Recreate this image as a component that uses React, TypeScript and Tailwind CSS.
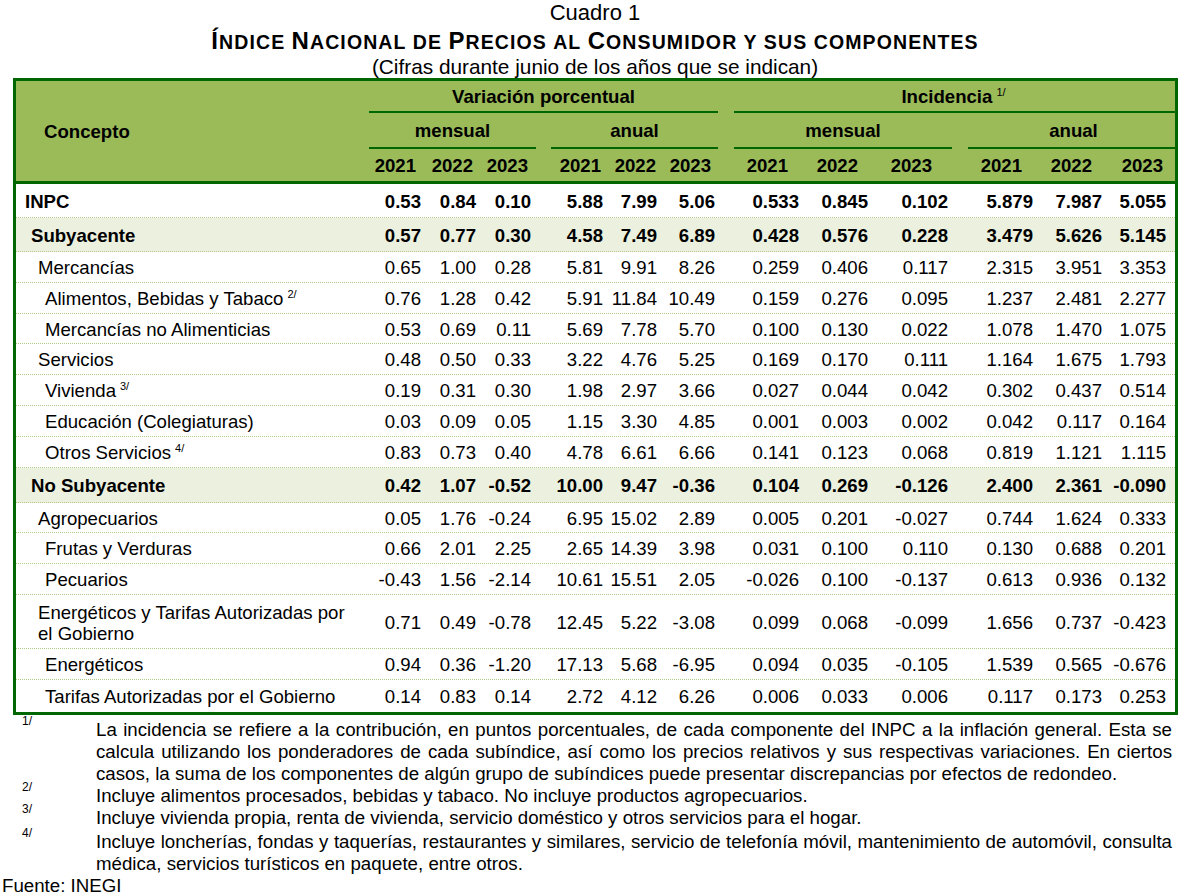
import React from "react";

const COLS =
  "grid grid-cols-[353px_55px_55px_57px_15px_55px_55px_57px_16px_73px_72px_73px_16px_72px_68px_67px]";

const numPr = [
  "pr-[3px]",
  "pr-[3px]",
  "pr-[5px]",
  "pr-[3px]",
  "pr-[4px]",
  "pr-[3px]",
  "pr-[8px]",
  "pr-[11px]",
  "pr-[4px]",
  "pr-[7px]",
  "pr-[6px]",
  "pr-[9px]",
];
const yearPr = [
  "pr-[8px]",
  "pr-[6px]",
  "pr-[8px]",
  "pr-[5px]",
  "pr-[5px]",
  "pr-[7px]",
  "pr-[19px]",
  "pr-[21px]",
  "pr-[20px]",
  "pr-[18px]",
  "pr-[16px]",
  "pr-[12px]",
];
const indent = ["pl-[9px]", "pl-[15px]", "pl-[22px]", "pl-[29px]"];

type Row = {
  label: string;
  sup?: string;
  level: number;
  bold?: boolean;
  shade?: boolean;
  h: string;
  wrap?: boolean;
  v: string[];
};

const rows: Row[] = [
  { label: "INPC", level: 0, bold: true, h: "h-[34px]", v: ["0.53", "0.84", "0.10", "5.88", "7.99", "5.06", "0.533", "0.845", "0.102", "5.879", "7.987", "5.055"] },
  { label: "Subyacente", level: 1, bold: true, shade: true, h: "h-[34px]", v: ["0.57", "0.77", "0.30", "4.58", "7.49", "6.89", "0.428", "0.576", "0.228", "3.479", "5.626", "5.145"] },
  { label: "Mercancías", level: 2, h: "h-[31px]", v: ["0.65", "1.00", "0.28", "5.81", "9.91", "8.26", "0.259", "0.406", "0.117", "2.315", "3.951", "3.353"] },
  { label: "Alimentos, Bebidas y Tabaco", sup: "2/", level: 3, h: "h-[31px]", v: ["0.76", "1.28", "0.42", "5.91", "11.84", "10.49", "0.159", "0.276", "0.095", "1.237", "2.481", "2.277"] },
  { label: "Mercancías no Alimenticias", level: 3, h: "h-[30px]", v: ["0.53", "0.69", "0.11", "5.69", "7.78", "5.70", "0.100", "0.130", "0.022", "1.078", "1.470", "1.075"] },
  { label: "Servicios", level: 2, h: "h-[31px]", v: ["0.48", "0.50", "0.33", "3.22", "4.76", "5.25", "0.169", "0.170", "0.111", "1.164", "1.675", "1.793"] },
  { label: "Vivienda", sup: "3/", level: 3, h: "h-[31px]", v: ["0.19", "0.31", "0.30", "1.98", "2.97", "3.66", "0.027", "0.044", "0.042", "0.302", "0.437", "0.514"] },
  { label: "Educación (Colegiaturas)", level: 3, h: "h-[31px]", v: ["0.03", "0.09", "0.05", "1.15", "3.30", "4.85", "0.001", "0.003", "0.002", "0.042", "0.117", "0.164"] },
  { label: "Otros Servicios", sup: "4/", level: 3, h: "h-[31px]", v: ["0.83", "0.73", "0.40", "4.78", "6.61", "6.66", "0.141", "0.123", "0.068", "0.819", "1.121", "1.115"] },
  { label: "No Subyacente", level: 1, bold: true, shade: true, h: "h-[35px]", v: ["0.42", "1.07", "-0.52", "10.00", "9.47", "-0.36", "0.104", "0.269", "-0.126", "2.400", "2.361", "-0.090"] },
  { label: "Agropecuarios", level: 2, h: "h-[30px]", v: ["0.05", "1.76", "-0.24", "6.95", "15.02", "2.89", "0.005", "0.201", "-0.027", "0.744", "1.624", "0.333"] },
  { label: "Frutas y Verduras", level: 3, h: "h-[31px]", v: ["0.66", "2.01", "2.25", "2.65", "14.39", "3.98", "0.031", "0.100", "0.110", "0.130", "0.688", "0.201"] },
  { label: "Pecuarios", level: 3, h: "h-[31px]", v: ["-0.43", "1.56", "-2.14", "10.61", "15.51", "2.05", "-0.026", "0.100", "-0.137", "0.613", "0.936", "0.132"] },
  { label: "Energéticos y Tarifas Autorizadas por el Gobierno", level: 2, wrap: true, h: "h-[54px]", v: ["0.71", "0.49", "-0.78", "12.45", "5.22", "-3.08", "0.099", "0.068", "-0.099", "1.656", "0.737", "-0.423"] },
  { label: "Energéticos", level: 3, h: "h-[31px]", v: ["0.94", "0.36", "-1.20", "17.13", "5.68", "-6.95", "0.094", "0.035", "-0.105", "1.539", "0.565", "-0.676"] },
  { label: "Tarifas Autorizadas por el Gobierno", level: 3, h: "h-[32px]", v: ["0.14", "0.83", "0.14", "2.72", "4.12", "6.26", "0.006", "0.033", "0.006", "0.117", "0.173", "0.253"] },
];

function Sup({ t }: { t: string }) {
  return <span className="relative -top-[7px] ml-[4px] text-[11px] font-normal">{t}</span>;
}

function DataRow({ r, last }: { r: Row; last: boolean }) {
  const cells: React.ReactNode[] = [];
  r.v.forEach((val, i) => {
    if (i === 3 || i === 6 || i === 9) cells.push(<div key={"g" + i} />);
    cells.push(
      <div key={i} className={`flex items-center justify-end pt-[2px] ${numPr[i]}`}>
        {val}
      </div>
    );
  });
  return (
    <div
      className={`${COLS} ${r.h} ${r.bold ? "font-bold" : ""} ${r.shade ? "bg-[#ebf1de]" : "bg-white"} ${
        last ? "" : "border-b border-dotted border-[#b3c98a]"
      }`}
    >
      <div className={`flex items-center pt-[2px] ${indent[r.level]}`}>
        {r.wrap ? (
          <span className="w-[316px] leading-[21px]">{r.label}</span>
        ) : (
          <span className="whitespace-nowrap">
            {r.label}
            {r.sup && <Sup t={r.sup} />}
          </span>
        )}
      </div>
      {cells}
    </div>
  );
}

const years = ["2021", "2022", "2023"];

function SC({ big, rest }: { big: string; rest: string }) {
  return (
    <span>
      {big && <span className="text-[24px]">{big}</span>}
      <span className="text-[19.5px]">{rest}</span>
    </span>
  );
}

export default function App() {
  return (
    <div className="w-[1190px] h-[896px] bg-white text-black font-['Liberation_Sans',Arial,sans-serif] text-[18.6px] overflow-hidden">
      <div className="flex flex-col items-center">
        <div className="h-[26px] text-[22px] leading-[26px]">Cuadro 1</div>
        <div className="h-[30px] leading-[30px] font-bold tracking-[1.1px] whitespace-nowrap">
          <SC big="Í" rest="NDICE" /> <SC big="N" rest="ACIONAL" /> <SC big="" rest="DE" />{" "}
          <SC big="P" rest="RECIOS" /> <SC big="" rest="AL" /> <SC big="C" rest="ONSUMIDOR" />{" "}
          <SC big="" rest="Y SUS COMPONENTES" />
        </div>
        <div className="h-[22px] text-[20.8px] leading-[22px]">
          (Cifras durante junio de los años que se indican)
        </div>
      </div>

      <div className="ml-[13px] w-[1165px] border-[3px] border-[#006600]">
        {/* header */}
        <div className="bg-[#9bbb59] font-bold border-b-[3px] border-[#006600]">
          <div className={`${COLS} grid-rows-[32px_36px_32px]`}>
            <div className="row-span-3 flex items-center pl-[28px] pt-[1px]">Concepto</div>
            <div className="col-start-2 col-end-9 flex items-center justify-center pt-[2px] border-b-2 border-[#006600]">
              <span>Variación porcentual</span>
            </div>
            <div className="col-start-10 col-end-17 flex items-center justify-center pt-[2px] border-b-2 border-[#006600]">
              <span className="pr-[2px]">
                Incidencia
                <Sup t="1/" />
              </span>
            </div>
            <div className="col-start-2 col-end-5 flex items-center justify-center pt-[2px] border-b-2 border-[#006600]">
              mensual
            </div>
            <div className="col-start-6 col-end-9 flex items-center justify-center pt-[2px] border-b-2 border-[#006600]">
              anual
            </div>
            <div className="col-start-10 col-end-13 flex items-center justify-center pt-[2px] border-b-2 border-[#006600]">
              mensual
            </div>
            <div className="col-start-14 col-end-17 flex items-center justify-center pt-[2px] border-b-2 border-[#006600]">
              <span className="pl-[4px]">anual</span>
            </div>
            {[0, 1, 2, 3].map((g) => (
              <React.Fragment key={g}>
                {g > 0 && <div />}
                {years.map((y, j) => (
                  <div
                    key={y}
                    className={`${g === 0 && j === 0 ? "col-start-2" : ""} flex items-center justify-end pt-[2px] ${yearPr[g * 3 + j]}`}
                  >
                    {y}
                  </div>
                ))}
              </React.Fragment>
            ))}
          </div>
        </div>
        {/* body */}
        {rows.map((r, i) => (
          <DataRow key={r.label} r={r} last={i === rows.length - 1} />
        ))}
      </div>

      {/* footnotes */}
      <div className="pt-[4px] leading-[22px] text-[18.7px]">
        <div className="flex">
          <div className="w-[96px] shrink-0 pl-[22px] text-[12px] leading-[12px] -mt-[4px]">1/</div>
          <div className="w-[1076px] text-justify">
            La incidencia se refiere a la contribución, en puntos porcentuales, de cada componente del INPC a la inflación
            general. Esta se calcula utilizando los ponderadores de cada subíndice, así como los precios relativos y sus
            respectivas variaciones. En ciertos casos, la suma de los componentes de algún grupo de subíndices puede
            presentar discrepancias por efectos de redondeo.
          </div>
        </div>
        <div className="flex">
          <div className="w-[96px] shrink-0 pl-[22px] text-[12px] leading-[12px] -mt-[4px]">2/</div>
          <div className="w-[1076px] text-justify">
            Incluye alimentos procesados, bebidas y tabaco. No incluye productos agropecuarios.
          </div>
        </div>
        <div className="flex">
          <div className="w-[96px] shrink-0 pl-[22px] text-[12px] leading-[12px] -mt-[4px]">3/</div>
          <div className="w-[1076px] text-justify">
            Incluye vivienda propia, renta de vivienda, servicio doméstico y otros servicios para el hogar.
          </div>
        </div>
        <div className="flex pt-[2px]">
          <div className="w-[96px] shrink-0 pl-[22px] text-[12px] leading-[12px] -mt-[4px]">4/</div>
          <div className="w-[1076px] text-justify">
            Incluye loncherías, fondas y taquerías, restaurantes y similares, servicio de telefonía móvil, mantenimiento de
            automóvil, consulta médica, servicios turísticos en paquete, entre otros.
          </div>
        </div>
        <div className="pl-[2px]">Fuente: INEGI</div>
      </div>
    </div>
  );
}
